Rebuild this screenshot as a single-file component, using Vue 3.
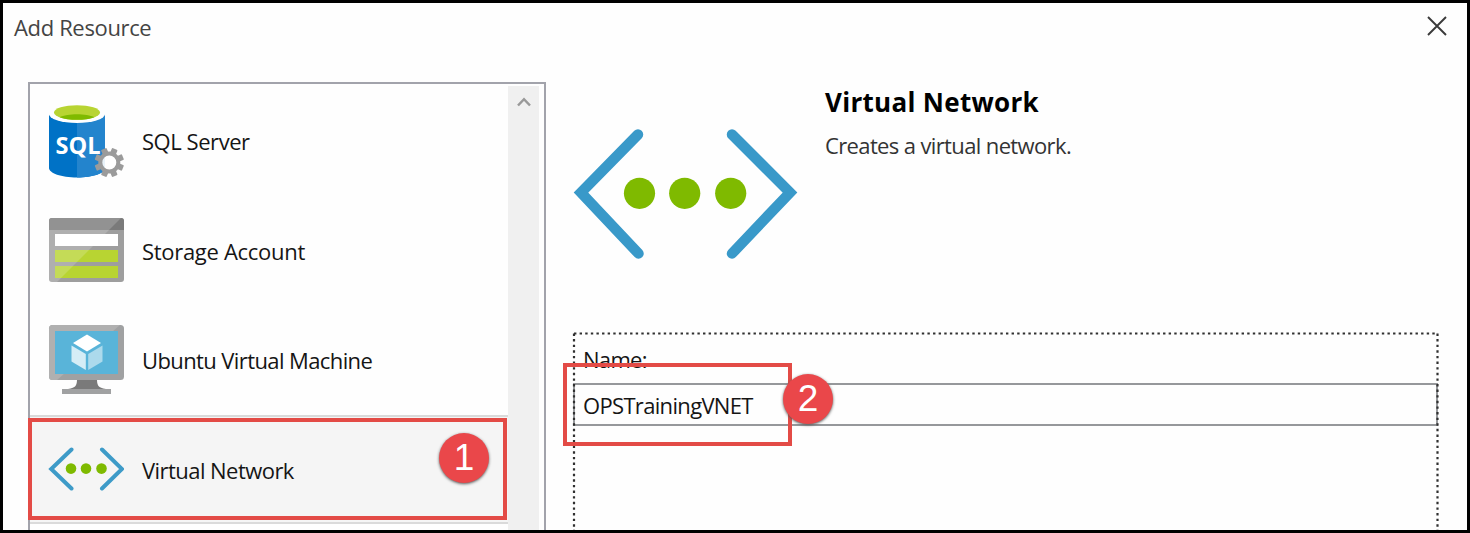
<script setup>
const resources = [
  { id: 'sql', name: 'SQL Server' },
  { id: 'storage', name: 'Storage Account' },
  { id: 'vm', name: 'Ubuntu Virtual Machine' },
  { id: 'vnet', name: 'Virtual Network', selected: true }
]
</script>

<template>
  <div class="dialog">
    <header class="titlebar">
      <span class="title">Add Resource</span>
      <svg class="close" width="22" height="22" viewBox="0 0 22 22">
        <path d="M2 2 20 20M20 2 2 20" fill="none" stroke="#3a3a3a" stroke-width="1.900" />
      </svg>
    </header>

    <main class="content">
      <section class="list-box">
        <ul class="list">
          <li v-for="r in resources" :key="r.id" class="item" :class="[r.id, { selected: r.selected }]">
            <svg v-if="r.id === 'sql'" class="icon" width="76" height="76" viewBox="0 0 76 76">
              <path d="M1 10V65C1 70 13 74.500 29 74.500S57 70 57 65V10Z" fill="#0072c6" />
              <path d="M29 10V74.500C45 74.500 57 70 57 65V10Z" fill="#2384cd" />
              <ellipse cx="29" cy="10.500" rx="28.300" ry="9.500" fill="#fefefe" />
              <ellipse cx="29" cy="9.500" rx="23" ry="7.300" fill="#b8d432" />
              <path d="M11.500 14.300C19.500 10.300 38.500 10.300 46.500 14.300C38.500 17.700 19.500 17.700 11.500 14.300Z" fill="#7fba00" />
              <text x="7.500" y="51" class="sql-text" textLength="45" lengthAdjust="spacingAndGlyphs">SQL</text>
              <g transform="translate(61.300 59.500)">
                <g fill="#9b9b9b">
                  <rect v-for="n in 8" :key="n" x="-3" y="-14.700" width="6" height="7" rx="1" :transform="`rotate(${n * 45 - 22.5})`" />
                </g>
                <circle r="9" fill="#fff" fill-opacity="0.9" stroke="#9b9b9b" stroke-width="4" />
              </g>
            </svg>
            <svg v-else-if="r.id === 'storage'" class="icon" width="76" height="66" viewBox="0 0 76 66">
              <rect x="1" y="1" width="75" height="64" rx="3" fill="#9e9e9e" />
              <path d="M1 13V4Q1 1 4 1H73Q76 1 76 4V13Z" fill="#7a7a7a" />
              <rect x="7" y="17" width="63" height="12" fill="#fff" />
              <rect x="7" y="33" width="63" height="12" fill="#b8d432" />
              <rect x="7" y="49" width="63" height="12" fill="#b8d432" />
              <path d="M4 1H73L9 65H4Q1 65 1 62V4Q1 1 4 1Z" fill="#fff" fill-opacity="0.18" />
            </svg>
            <svg v-else-if="r.id === 'vm'" class="icon" width="76" height="72" viewBox="0 0 76 72">
              <path d="M29 55H49C49 61 50 64 58 65H20C28 64 29 61 29 55Z" fill="#7a7a7a" />
              <rect x="14" y="65" width="49" height="5" fill="#a0a1a2" />
              <rect x="1" y="1" width="75" height="55" rx="3.500" fill="#a0a1a2" />
              <path d="M4.500 1H72L9 56H4.500Q1 56 1 52.500V4.500Q1 1 4.500 1Z" fill="#b0b0b0" />
              <rect x="7" y="7" width="63" height="43" fill="#59b4d9" />
              <path d="M39 10.500 53 19 39 27.500 25 19Z" fill="#fff" />
              <path d="M23.500 21.500 37.800 30V46L23.500 37.500Z" fill="#d5edf6" />
              <path d="M54.500 21.500 40.200 30V46L54.500 37.500Z" fill="#acdaec" />
            </svg>
            <svg v-else class="icon" width="76" height="44" viewBox="0 0 76 44">
              <path d="M23.500 2.500 3.200 22 23.500 41.500M54 2.500 74 22 54 41.500" fill="none" stroke="#3e9bc8" stroke-width="4" stroke-linecap="round" />
              <g fill="#7fba00">
                <circle cx="23" cy="21.600" r="5.300" />
                <circle cx="38" cy="21.600" r="5.300" />
                <circle cx="53.500" cy="21.600" r="5.300" />
              </g>
            </svg>
            <span class="name">{{ r.name }}</span>
          </li>
        </ul>
        <div class="scrollbar">
          <svg width="16" height="12" viewBox="0 0 16 12">
            <path d="M2 9.500 8 3.200 14 9.500" fill="none" stroke="#999" stroke-width="2.500" />
          </svg>
        </div>
        <div class="callout callout-list"></div>
        <div class="badge badge-one">1</div>
      </section>

      <section class="details">
        <div class="summary">
          <svg class="hero" width="226" height="132" viewBox="0 0 226 132">
            <g fill="none" stroke="#3999c9" stroke-width="10.500" stroke-linecap="round" stroke-linejoin="miter">
              <path d="M66 6.500 9 64.500 66.500 125.500M160 6.500 218 64.500 160 125.500" />
            </g>
            <g fill="#7fba00">
              <circle cx="67.500" cy="65.300" r="15.600" />
              <circle cx="112.700" cy="65.300" r="15.600" />
              <circle cx="158.700" cy="65.300" r="15.600" />
            </g>
          </svg>
          <div>
            <h1>Virtual Network</h1>
            <p>Creates a virtual network.</p>
          </div>
        </div>
        <div class="form">
          <label>Name:</label>
          <div class="field">OPSTrainingVNET</div>
          <svg class="focus" width="868" height="200" viewBox="0 0 868 200">
            <path d="M2 2.500H866M2 2.500V200M865.500 2.500V200" fill="none" stroke="#303030" stroke-width="2.200" stroke-dasharray="2.400 3.210" />
          </svg>
          <div class="callout callout-name"></div>
          <div class="badge badge-two">2</div>
        </div>
      </section>
    </main>
  </div>
</template>

<style>
body { margin: 0; overflow: hidden; }
</style>

<style scoped>
.dialog {
  box-sizing: border-box;
  width: 1470px;
  height: 533px;
  border: 3px solid #000;
  background: #fefefe;
  overflow: hidden;
  color: #151515;
  font-family: "Open Sans", "Noto Sans", sans-serif;
  font-size: 22px;
  line-height: 30px;
}
.titlebar {
  height: 79px;
  display: flex;
  justify-content: space-between;
  align-items: flex-start;
  box-sizing: border-box;
  padding: 9px 19px 0 11px;
}
.title { color: #444; letter-spacing: -0.35px; }
.close { margin-top: 3px; }
.content { display: flex; height: 460px; }
.list-box {
  position: relative;
  box-sizing: border-box;
  width: 518px;
  margin-left: 25px;
  border: 2px solid #a2a3ab;
  display: flex;
  padding: 2px 5px 0 0;
  background: #fefefe;
}
.list { list-style: none; margin: 0; padding: 0; width: 478px; }
.item {
  box-sizing: border-box;
  height: 109.500px;
  display: flex;
  align-items: center;
  gap: 18px;
  padding-left: 18px;
}
.selected { background: #f5f5f5; border: solid #dadada; border-width: 2px 0; }
.name { white-space: nowrap; letter-spacing: -0.3px; }
.sql .name { letter-spacing: -0.45px; }
.vm .name { letter-spacing: -0.6px; }
.vnet .name { letter-spacing: -0.55px; }
.storage .name, .vnet .name { margin-top: 1px; }
.sql-text { font: 700 23px "Open Sans", sans-serif; fill: #fff; }
.scrollbar { width: 31px; background: #f0f0f0; display: flex; justify-content: center; padding-top: 10px; }
.details { flex: 1; padding-left: 26px; }
.summary { display: flex; align-items: flex-start; height: 250px; gap: 27px; }
.hero { margin-top: 46px; }
h1 { margin: 4px 0 0; font-size: 26px; line-height: 32px; color: #000; font-weight: 700; white-space: nowrap; letter-spacing: 0.3px; }
p { margin: 12px 0 0; color: #333; white-space: nowrap; letter-spacing: -0.63px; }
.form { position: relative; width: 865px; margin-left: 1px; padding-top: 12px; }
label { display: block; padding-left: 10px; letter-spacing: -0.7px; }
.field {
  box-sizing: border-box;
  height: 43px;
  margin-top: 9px;
  padding-left: 8px;
  border: 2px solid #96989b;
  line-height: 40px;
  letter-spacing: -0.67px;
}
.focus { position: absolute; left: -1px; top: -1px; }
.callout { position: absolute; box-sizing: border-box; border: 4px solid #e34b46; }
.callout-list { left: -2px; top: 334px; width: 479px; height: 102px; }
.callout-name { left: -10px; top: 31px; width: 229px; height: 83px; }
.badge {
  position: absolute;
  width: 50px;
  height: 50px;
  border-radius: 50%;
  background: #ea474a;
  box-shadow: 0 1px 3px #555;
  color: #fff;
  font: 37px/50px "Liberation Sans", sans-serif;
  text-align: center;
}
.badge-one { left: 409px; top: 349px; }
.badge-two { left: 210px; top: 42px; }
</style>
